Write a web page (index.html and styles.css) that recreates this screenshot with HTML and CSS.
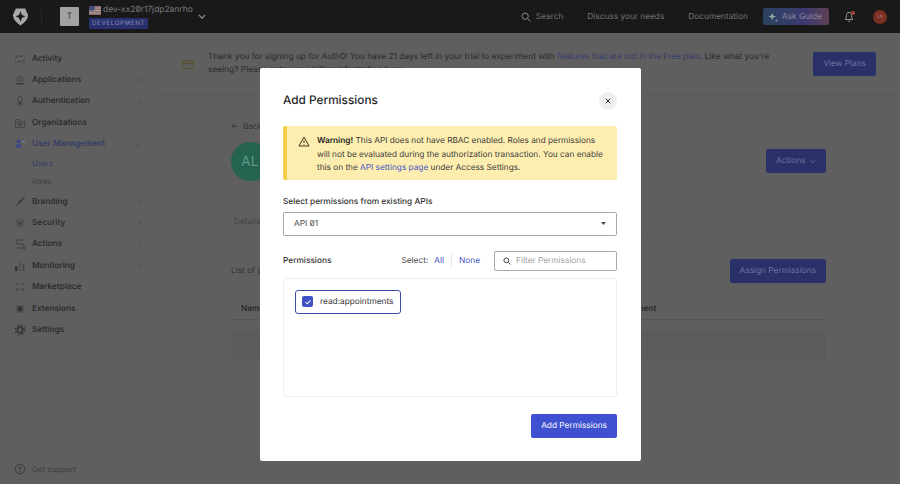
FILE: index.html
```html
<!DOCTYPE html>
<html lang="en">
<head>
<meta charset="utf-8">
<title>Add Permissions</title>
<link rel="stylesheet" href="styles.css">
</head>
<body>
<header class="topbar">
  <svg class="logo" viewBox="0 0 16 18" width="15" height="18"><path fill="#a8a8a8" d="M3 0H13L16 6.500C16.300 11 13.500 14.500 8 18 2.500 14.500-.3 11 0 6.500Z"/><path fill="#191919" d="M8 2.800 9.600 6.800 13.200 8.300 9.600 10 8 14 6.400 10 2.800 8.300 6.400 6.800Z"/></svg>
  <span class="divider"></span>
  <span class="tenant-box">T</span>
  <div class="tenant">
    <div class="tenant-name"><svg class="flag" viewBox="0 0 12 9" width="12" height="9"><rect width="12" height="9" fill="#8d6a6a"/><rect y="1.500" width="12" height="1" fill="#b4a6a6"/><rect y="4" width="12" height="1" fill="#b4a6a6"/><rect y="6.500" width="12" height="1" fill="#b4a6a6"/><rect width="5.500" height="4.500" fill="#3f4a78"/></svg><span class="zero">dev-xx20r17jdp2anrho</span></div>
    <span class="env">DEVELOPMENT</span>
  </div>
  <svg class="chev-top" viewBox="0 0 10 6" width="8" height="5"><path d="M1 1l4 4 4-4" fill="none" stroke="#9a9a9a" stroke-width="1.400"/></svg>
  <nav class="topnav">
    <span class="search"><svg viewBox="0 0 12 12" width="10" height="10"><circle cx="5" cy="5" r="3.800" fill="none" stroke="#8a8a8a" stroke-width="1.200"/><path d="M8 8l3.300 3.300" stroke="#8a8a8a" stroke-width="1.200"/></svg>Search</span>
    <span class="discuss">Discuss your needs</span>
    <span class="docs">Documentation</span>
    <span class="guide"><svg viewBox="0 0 12 12" width="10" height="10"><path fill="#9aa" d="M5 1 6.200 4.300 9.500 5.500 6.200 6.700 5 10 3.800 6.700.5 5.500 3.800 4.300Z"/><path fill="#9aa" d="M10 8.500l.5 1.300 1.300.5-1.300.5-.5 1.300-.5-1.300-1.300-.5 1.300-.5Z"/></svg>Ask Guide</span>
    <span class="bell"><svg viewBox="0 0 12 14" width="10" height="12"><path d="M6 1.500C3.800 1.500 3 3.200 3 5.500 3 8 2 9 1.500 10h9C10 9 9 8 9 5.500 9 3.200 8.200 1.500 6 1.500ZM4.500 11.500c.3 1 2.700 1 3 0" fill="none" stroke="#a0a0a0" stroke-width="1.100"/></svg><i class="dot"></i></span>
    <span class="avatar-small">LK</span>
  </nav>
</header>
<div class="layout">
  <aside class="sidebar">
    <ul class="menu">
      <li class="item"><svg class="ic" viewBox="0 0 12 12"><rect x="1" y="2" width="10" height="8" fill="#525252"/><path d="M2 8l3-3 2 1.500L10 4" fill="none" stroke="#7d7d7d"/></svg>Activity</li>
      <li class="item arrow"><svg class="ic" viewBox="0 0 12 12"><path fill="#525252" d="M6 1 10 3.500V7L6 9 2 7V3.500Z"/><path fill="#3a3a3a" d="M1.500 9h9v1.500h-9z"/></svg>Applications</li>
      <li class="item arrow"><svg class="ic" viewBox="0 0 12 12"><path d="M3.800 5V3.500a2.200 2.200 0 0 1 4.400 0V5" fill="none" stroke="#444"/><rect x="3" y="5" width="6" height="6" rx="1" fill="#525252"/><circle cx="6" cy="8" r="1" fill="#333"/></svg>Authentication</li>
      <li class="item"><svg class="ic" viewBox="0 0 12 12"><path fill="none" stroke="#444" d="M1.500 2.500h4v8h-4zM7 4.500h3.500v6H7z"/><path stroke="#444" d="M2.500 5h2M2.500 7.500h2M8 7h1.500"/></svg>Organizations</li>
      <li class="item open"><svg class="ic" viewBox="0 0 12 12"><circle cx="4.500" cy="3.500" r="2" fill="#3d4780"/><path fill="#3d4780" d="M1.500 10c0-3 1-4 3-4s3 1 3 4z"/><path fill="#7c7f92" d="M8 3h3v1.500H8z"/></svg>User Management</li>
      <li class="sub current">Users</li>
      <li class="sub">Roles</li>
      <li class="item arrow"><svg class="ic" viewBox="0 0 12 12"><path fill="#333" d="M10.500 1 11 1.500 5 8 3.800 6.800Z"/><path fill="#444" d="M3.200 7.500 4.300 8.600C4 10 2.500 10.500 1 10.500 2 10 2.500 9 3.200 7.500Z"/></svg>Branding</li>
      <li class="item arrow"><svg class="ic" viewBox="0 0 12 12"><path fill="#545454" d="M6 1 10.500 2.500V6C10.500 8.500 8.500 10.300 6 11 3.500 10.300 1.500 8.500 1.500 6V2.500Z"/><path fill="none" stroke="#333" d="M4 5.800 5.500 7.300 8 4.800"/></svg>Security</li>
      <li class="item arrow"><svg class="ic" viewBox="0 0 12 12"><path fill="none" stroke="#3f3f3f" d="M10 2H4a2 2 0 0 0 0 4h4a2 2 0 0 1 0 4H3"/><circle cx="10" cy="10" r="1.200" fill="#3f3f3f"/></svg>Actions</li>
      <li class="item arrow"><svg class="ic" viewBox="0 0 12 12"><rect x="1" y="6" width="2.500" height="5" fill="#333"/><rect x="5" y="1.500" width="2" height="9.500" fill="#505050"/><rect x="8.500" y="4" width="2" height="7" fill="#444"/></svg>Monitoring</li>
      <li class="item"><svg class="ic" viewBox="0 0 12 12"><g fill="#4e4e4e"><rect x="1.500" y="1.500" width="3" height="3"/><rect x="1.500" y="7" width="3" height="3"/><rect x="7" y="7" width="3" height="3"/></g><path stroke="#4e4e4e" d="M8.500 1v4M6.500 3h4"/></svg>Marketplace</li>
      <li class="item"><svg class="ic" viewBox="0 0 12 12"><rect x="3.500" y="3.500" width="5" height="5" fill="#333"/><rect x="2.500" y="2.500" width="7" height="7" fill="none" stroke="#525252"/></svg>Extensions</li>
      <li class="item"><svg class="ic" viewBox="0 0 12 12"><circle cx="6" cy="6" r="2.800" fill="none" stroke="#333" stroke-width="1.800"/><circle cx="6" cy="6" r="4.800" fill="none" stroke="#333" stroke-width="1.300" stroke-dasharray="1.800 1.970"/></svg>Settings</li>
    </ul>
    <div class="support"><svg class="ic" viewBox="0 0 12 12"><circle cx="6" cy="6" r="4.800" fill="none" stroke="#3c3c3c"/><path d="M4.700 4.700a1.300 1.300 0 1 1 1.300 1.500v1M6 8.300v1" fill="none" stroke="#3c3c3c"/></svg>Get support</div>
  </aside>
  <main class="main">
    <section class="banner">
      <svg class="card-ic" viewBox="0 0 12 9" width="12" height="9"><rect x=".5" y=".5" width="11" height="8" rx="1" fill="none" stroke="#57522f"/><rect x="1" y="2.500" width="10" height="1.500" fill="#57522f"/></svg>
      <p class="banner-text">Thank you for signing up for Auth0! You have 21 days left in your trial to experiment with <a>features that are not in the Free plan</a>. Like what you're seeing? Please enter your billing information here.</p>
      <span class="btn">View Plans</span>
    </section>
    <section class="content">
      <div class="back">&larr;&nbsp; Back to Users</div>
      <div class="head">
        <span class="big-avatar">AL</span>
        <span class="btn btn-actions">Actions <svg viewBox="0 0 10 6" width="7" height="5"><path d="M1 1l4 4 4-4" fill="none" stroke="#7d84a8" stroke-width="1.300"/></svg></span>
      </div>
      <div class="tabs"><span>Details</span></div>
      <div class="perm-head"><span class="perm-list">List of permissions</span><span class="btn">Assign Permissions</span></div>
      <div class="thead"><span>Name</span><span class="assign">Assignment</span></div>
      <div class="trow"></div>
    </section>
  </main>
</div>

<div class="modal">
  <div class="modal-head">
    <h2>Add Permissions</h2>
    <span class="close"><svg viewBox="0 0 8 8" width="6" height="6"><path d="M1 1l6 6M7 1L1 7" stroke="#2a2a2a" stroke-width="1.300"/></svg></span>
  </div>
  <div class="warning">
    <svg class="warn-ic" viewBox="0 0 14 13" width="12" height="11"><path d="M7 1.200 13 11.800H1Z" fill="none" stroke="#2f2b1a" stroke-width="1.100" stroke-linejoin="round"/><path d="M7 5v3.300M7 9.300v1" stroke="#2f2b1a" stroke-width="1.100"/></svg>
    <p><b>Warning!</b> This API does not have RBAC enabled. Roles and permissions will not be evaluated during the authorization transaction. You can enable this on the <a>API settings page</a> under Access Settings.</p>
  </div>
  <label class="field-label">Select permissions from existing APIs</label>
  <div class="select"><span class="zero">API 01</span><svg viewBox="0 0 8 5" width="5" height="3"><path d="M0 0h8L4 5Z" fill="#4a4a4a"/></svg></div>
  <div class="perm-bar">
    <span class="perm-title">Permissions</span>
    <span class="select-links">Select: <a class="all">All</a><a class="none">None</a></span>
    <span class="filter"><svg viewBox="0 0 12 12" width="8" height="8"><circle cx="5" cy="5" r="3.600" fill="none" stroke="#444" stroke-width="1.500"/><path d="M8 8l3.300 3.300" stroke="#444" stroke-width="1.500"/></svg>Filter Permissions</span>
  </div>
  <div class="perm-box">
    <div class="chip"><span class="check"><svg viewBox="0 0 10 10" width="8" height="8"><path d="M2 5.200 4.200 7.300 8 3" fill="none" stroke="#fff" stroke-width="1.300"/></svg></span>read:appointments</div>
  </div>
  <div class="modal-foot"><span class="btn-primary">Add Permissions</span></div>
</div>
</body>
</html>
```
FILE: styles.css
```css
* { box-sizing: border-box; }
html, body { margin: 0; height: 100%; }
body {
  width: 900px;
  height: 484px;
  overflow: hidden;
  background: #5f5f5f;
  color: #2b2b2b;
  font-family: Inter, "Liberation Sans", sans-serif;
  font-size: 8.300px;
  position: relative;
  text-rendering: geometricPrecision;
}
a { color: #363c6e; }
.zero { font-feature-settings: "zero"; }
.topbar {
  height: 33px;
  background: #191919;
  display: flex;
  align-items: center;
  padding-left: 13px;
  color: #747474;
}
.logo { flex: none; }
.divider { width: 1px; height: 14px; margin-left: 13px; background: #272727; }
.tenant-box {
  width: 19px; height: 19px;
  margin-left: 18px;
  background: #a2a2a2;
  color: #3d3d3d;
  display: flex; align-items: center; justify-content: center;
  border-radius: 1px;
  font-size: 9px;
}
.tenant { margin-left: 10px; display: flex; flex-direction: column; align-items: flex-start; gap: 1px; }
.tenant-name { display: flex; align-items: center; gap: 2px; font-size: 8.450px; color: #7a7a7a; line-height: 13px; }
.env {
  background: #29306f;
  color: #7a80a8;
  font-size: 6.200px;
  font-weight: 500;
  letter-spacing: .62px;
  line-height: 11px;
  padding: 0 3px;
  border-radius: 1px;
}
.chev-top { margin-left: 5px; }
.topnav { margin-left: auto; display: flex; align-items: center; font-size: 8.300px; }
.search { display: flex; align-items: center; gap: 5px; margin-right: 24px; }
.discuss { margin-right: 24px; }
.docs { margin-right: 15px; }
.guide {
  display: flex; align-items: center; gap: 4px;
  height: 17px;
  padding: 0 7px 0 5px;
  border-radius: 2px;
  background: linear-gradient(90deg, #2b4260, #3a3a70 60%, #5f3f55);
  color: #8a8a9c;
}
.bell { position: relative; margin-left: 15px; display: flex; }
.dot { position: absolute; right: -1px; top: 0; width: 4px; height: 4px; border-radius: 50%; background: #a8402f; }
.avatar-small {
  width: 14px; height: 14px;
  margin: 0 13px 0 19px;
  border-radius: 50%;
  background: #7a2f22;
  color: #b07a70;
  font-size: 5px;
  display: flex; align-items: center; justify-content: center;
}
.layout { display: flex; height: 451px; }
.sidebar {
  width: 158px;
  flex: none;
  border-right: 1px solid #5a5a5a;
  padding: 15px 0 0 14px;
  display: flex;
  flex-direction: column;
  justify-content: space-between;
}
.menu { list-style: none; margin: 0; padding: 0; }
.ic { width: 12px; height: 12px; flex: none; margin-right: 6px; }
.item {
  display: flex; align-items: center;
  height: 21.400px;
  font-weight: 450;
  color: #262626;
  position: relative;
}
.arrow::after {
  content: "";
  position: absolute; right: 17px; top: 9px;
  width: 3px; height: 3px;
  border-top: 1px solid #555; border-right: 1px solid #555;
  transform: rotate(45deg);
}
.open { color: #2f3866; }
.open::after {
  content: "";
  position: absolute; right: 17px; top: 8px;
  width: 3px; height: 3px;
  border-bottom: 1px solid #555; border-right: 1px solid #555;
  transform: rotate(45deg);
}
.sub { height: 18px; line-height: 18px; padding-left: 18px; font-size: 7.600px; color: #3f3f3f; }
.current { color: #353c68; }
.support { display: flex; align-items: center; height: 20px; margin-bottom: 5px; font-size: 7.900px; color: #3d3d3d; }
.main { flex: 1; min-width: 0; }
.banner {
  height: 63px;
  padding: 0 24px 0 24px;
  border-bottom: 1px solid #5a5a5a;
  display: flex;
  align-items: center;
}
.card-ic { flex: none; margin-right: 14px; }
.banner-text { margin: 0 24px 0 0; flex: 1; line-height: 13px; font-size: 8.350px; color: #2a2a2a; }
.btn {
  flex: none;
  display: inline-flex; align-items: center; justify-content: center; gap: 5px;
  height: 24px;
  padding: 0 10px;
  background: #2a3068;
  border-radius: 2px;
  color: #6f759f;
}
.btn-actions { width: 60px; }
.content { padding: 0 74px 0 73px; }
.back { margin-top: 24px; height: 12px; line-height: 12px; font-size: 8px; color: #333; }
.head { display: flex; justify-content: space-between; align-items: center; margin-top: 10px; height: 38.500px; }
.big-avatar {
  width: 38.500px; height: 38.500px;
  border-radius: 50%;
  background: #24634f;
  color: #5c9787;
  font-size: 14px;
  display: flex; align-items: center; padding-left: 10px;
}
.tabs { height: 55px; border-bottom: 1px solid #5a5a5a; padding: 0 0 7px 3px; color: #444; display: flex; align-items: flex-end; line-height: 12px; }
.perm-head { display: flex; justify-content: space-between; align-items: center; margin-top: 23px; }
.perm-list { color: #333; }
.thead { display: flex; align-items: flex-end; height: 37px; padding: 0 10px 4px; line-height: 12px; border-bottom: 1px solid #555; font-weight: 500; color: #222; }
.assign { margin-left: 345px; }
.trow { margin-top: 10px; height: 30px; background: #5c5c5c; }

.modal {
  position: absolute;
  left: 260px; top: 68px;
  width: 380.500px; height: 393px;
  background: #fff;
  border-radius: 2px;
  padding: 23px 23.500px 23px 23px;
  display: flex;
  flex-direction: column;
}
.modal-head { display: flex; justify-content: space-between; align-items: center; height: 18px; margin-bottom: 17px; }
h2 { margin: 0; font-size: 11.800px; font-weight: 500; color: #1f1f1f; }
.close {
  width: 18px; height: 18px;
  margin-top: 1px;
  border-radius: 50%;
  background: #efefef;
  display: flex; align-items: center; justify-content: center;
}
.warning {
  height: 54px;
  background: #fdeeb0;
  border-left: 4px solid #f1cf4d;
  border-radius: 2px;
  padding: 8.400px 10px 0 11px;
  display: flex;
  gap: 7px;
  color: #3a3a3a;
  flex: none;
}
.warn-ic { flex: none; margin-top: 2px; }
.warning p { margin: 0; font-size: 8.250px; line-height: 13.300px; }
.warning b { font-weight: 600; color: #222; }
.warning a { color: #3f51c4; }
.field-label { margin-top: 15.500px; font-weight: 500; line-height: 12px; color: #333; }
.select {
  margin-top: 4.500px;
  height: 23.500px;
  border: 1px solid #a8a8a8;
  border-radius: 2px;
  padding: 0 10px;
  display: flex; align-items: center; justify-content: space-between;
  color: #444;
}
.perm-bar { display: flex; align-items: center; margin-top: 15px; height: 20.500px; color: #444; }
.perm-title { font-weight: 500; color: #333; }
.select-links { margin-left: auto; display: flex; align-items: center; margin-right: 14px; }
.select-links a { color: #3f51c4; }
.all { margin-left: 6px; padding-right: 7px; border-right: 1px solid #e8e8e8; line-height: 14px; }
.none { margin-left: 7px; }
.filter {
  width: 123px; height: 20.500px;
  border: 1px solid #a8a8a8;
  border-radius: 2px;
  padding-left: 8px;
  display: flex; align-items: center; gap: 5px;
  color: #a0a0a0;
}
.perm-box {
  margin-top: 7px;
  height: 119px;
  border: 1px solid #eee;
  border-radius: 3px;
  padding: 11px;
  flex: none;
}
.chip {
  width: 106px; height: 23.500px;
  border: 1.500px solid #3d4ca8;
  border-radius: 3px;
  display: flex; align-items: center; gap: 7px;
  padding-left: 6px;
  color: #333;
}
.check {
  width: 11px; height: 11px;
  border-radius: 2px;
  background: #3f51c4;
  display: flex; align-items: center; justify-content: center;
}
.modal-foot { display: flex; justify-content: flex-end; margin-top: 17px; }
.btn-primary {
  display: flex; align-items: center;
  height: 23.500px; padding: 0 10px;
  background: #3f51d0;
  border-radius: 2px;
  color: #fff;
}
```
